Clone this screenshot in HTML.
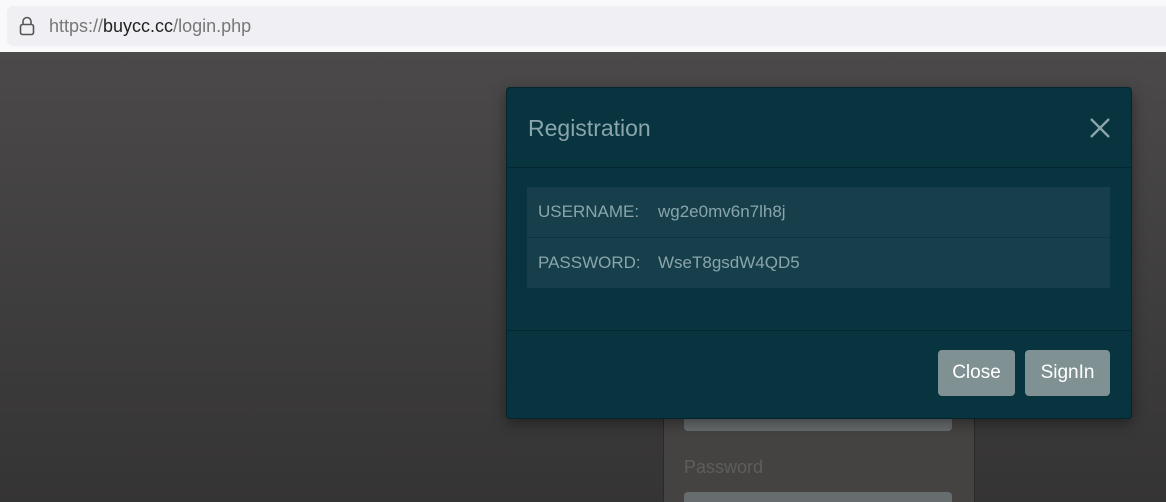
<!DOCTYPE html>
<html style="width:1166px;height:502px;overflow:hidden"><head><style>
html,body{margin:0;width:1166px;height:502px;overflow:hidden}
body{font-family:"Liberation Sans",sans-serif;position:relative;background:#fff}
.bar{position:absolute;left:0;top:0;width:1166px;height:52px;background:#f9f9fb;border-bottom:1px solid #e0e0e0}
.url{position:absolute;left:7px;top:6px;width:1159px;height:40px;background:#f0f0f4;border-radius:6px 0 0 6px}
.url span{position:absolute;left:42px;top:10px;font-size:18px;color:#777}
.url b{font-weight:normal;color:#222}
.page{position:absolute;left:0;top:52px;width:1166px;height:450px;background:linear-gradient(#4b4949,#353434);overflow:hidden}
.login{position:absolute;left:663px;top:328px;width:310px;height:122px;border:1px solid #2a2a2a;border-bottom:none;background:#454342;overflow:hidden}
.inp{position:absolute;left:20px;width:268px;background:#676c6e;border-radius:4px}
.modal{position:absolute;left:506px;top:87px;width:624px;height:330px;background:#07343f;border:1px solid #04252d;border-radius:4px;box-shadow:0 4px 14px rgba(0,0,0,.4)}
.title{position:absolute;left:21px;top:27px;font-size:23px;color:#8aa5ab}
.x{position:absolute;left:582px;top:29px}
.hr{position:absolute;left:0;width:624px;height:1px;background:#032730}
.tbl{position:absolute;left:20px;top:99px;width:583px;background:#163f4b}
.row{height:50px;line-height:50px;font-size:17px;color:#8aa5ab;padding-left:11px}
.row span{display:inline-block;width:120px}
.btn{position:absolute;top:262px;height:46px;line-height:46px;background:#7f9193;color:#fff;font-size:19px;text-align:center;border-radius:4px}
</style></head><body>
<div class="bar"><div class="url">
<svg style="position:absolute;left:12px;top:10px" width="16" height="20" viewBox="0 0 16 20"><rect x="1.5" y="8.5" width="13" height="10" rx="2" fill="none" stroke="#555" stroke-width="1.6"/><path d="M4 8.5V5.5a4 4 0 0 1 8 0v3" fill="none" stroke="#555" stroke-width="1.6"/></svg>
<span>https://<b>buycc.cc</b>/login.php</span></div></div>
<div class="page">
<div class="login">
<div class="inp" style="top:0;height:50px"></div>
<div style="position:absolute;left:20px;top:76px;font-size:18px;color:#5d5d5d">Password</div>
<div class="inp" style="top:111px;height:30px"></div>
</div>
</div>
<div class="modal">
<div class="title">Registration</div>
<svg class="x" width="22" height="22" viewBox="0 0 22 22"><path d="M2 2L20 20M20 2L2 20" stroke="#8aa5ab" stroke-width="2.4"/></svg>
<div class="hr" style="top:79px"></div>
<div class="tbl">
<div class="row" style="border-bottom:1px solid #0b3541"><span>USERNAME:</span>wg2e0mv6n7lh8j</div>
<div class="row"><span>PASSWORD:</span>WseT8gsdW4QD5</div>
</div>
<div class="hr" style="top:242px"></div>
<div class="btn" style="left:431px;width:77px">Close</div>
<div class="btn" style="left:518px;width:85px">SignIn</div>
</div>
</body></html>
